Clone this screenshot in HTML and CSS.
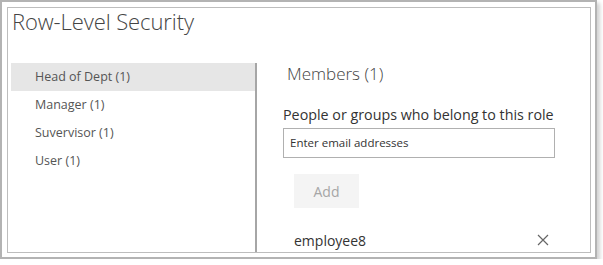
FILE: index.html
```html
<!DOCTYPE html>
<html>
<head>
<meta charset="utf-8">
<link rel="stylesheet" href="styles.css">
</head>
<body>
<div class="frame">
  <div class="panel">
    <h1 class="title">Row-Level Security</h1>
    <div class="content">
      <ul class="roles">
        <li class="role selected">Head of Dept (1)</li>
        <li class="role">Manager (1)</li>
        <li class="role">Suvervisor (1)</li>
        <li class="role">User (1)</li>
      </ul>
      <div class="members">
        <h2 class="members-title">Members (1)</h2>
        <div class="label">People or groups who belong to this role</div>
        <div class="input">Enter email addresses</div>
        <button class="add">Add</button>
        <div class="member">
          <span class="member-name">employee8</span>
          <svg class="remove" width="12" height="12" viewBox="0 0 12 12"><path d="M1 1 L11 11 M11 1 L1 11" stroke="#666" stroke-width="1.2" fill="none"/></svg>
        </div>
      </div>
    </div>
  </div>
</div>
</body>
</html>
```

FILE: styles.css
```css
* { box-sizing: border-box; }
html, body { margin: 0; padding: 0; background: #fff; }
body { font-family: "Open Sans", "Noto Sans", sans-serif; color: #333; }
.frame {
  width: 597px;
  height: 259px;
  border: 2px solid #b3b3b3;
  padding: 5px;
  background: #fff;
  box-shadow: 3px 3px 4px rgba(0,0,0,0.18);
}
.panel {
  width: 584px;
  height: 246px;
  border: 1px solid #bdbdbd;
  display: flex;
  flex-direction: column;
}
.title {
  margin: 0;
  padding: 0 0 0 4px;
  font-weight: 300;
  font-size: 22px;
  line-height: 26px;
  height: 55px;
  color: #444;
  letter-spacing: -0.1px;
}
.content { display: flex; flex: 1; min-height: 0; }
.roles {
  list-style: none;
  margin: 0 0 0 3px;
  padding: 0;
  width: 246px;
  border-right: 2px solid #a6a6a6;
}
.role {
  height: 28px;
  line-height: 28px;
  padding-left: 24px;
  font-size: 12.5px;
  color: #555;
}
.role.selected { background: #e6e6e6; }
.members { flex: 1; padding-left: 26px; }
.members-title {
  margin: 0;
  padding: 0 0 0 4px;
  font-weight: 300;
  font-size: 17px;
  line-height: 22px;
  color: #444;
}
.label {
  margin-top: 21px;
  font-size: 14.3px;
  line-height: 18px;
  color: #333;
}
.input {
  margin-top: 4px;
  width: 272px;
  height: 30px;
  border: 1px solid #b0b0b0;
  font-size: 11.5px;
  line-height: 28px;
  padding-left: 6px;
  color: #333;
}
.add {
  display: block;
  margin: 16px 0 0 11px;
  width: 65px;
  height: 34px;
  border: none;
  background: #f4f4f4;
  color: #a6a6a6;
  font-family: inherit;
  font-size: 14px;
}
.member {
  display: flex;
  align-items: center;
  justify-content: space-between;
  margin: 22px 0 0 11px;
  width: 255px;
  height: 20px;
}
.member-name { font-size: 14px; color: #333; }
.remove { display: block; }
```
